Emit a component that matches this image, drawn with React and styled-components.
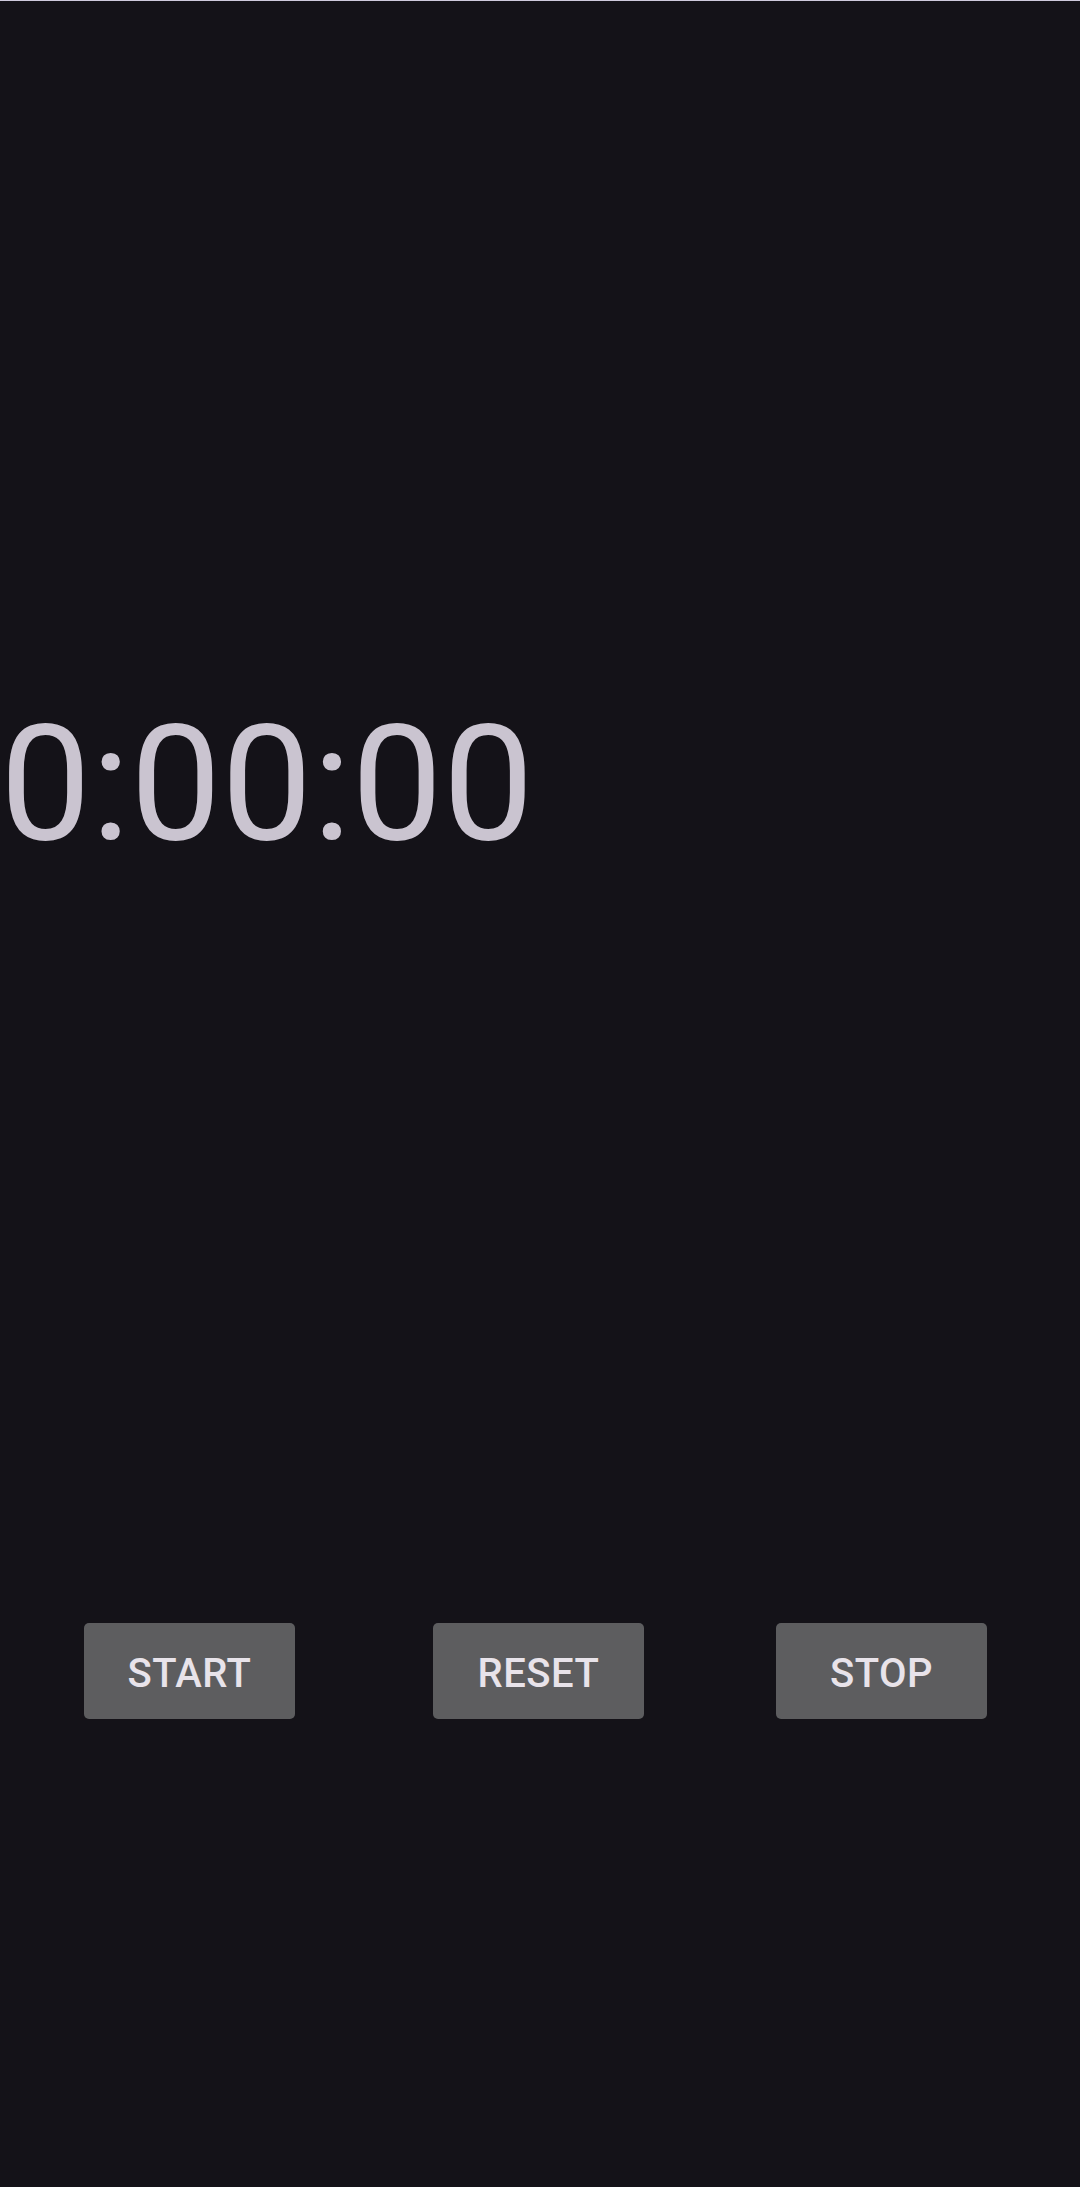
import React from "react";
import styled, { createGlobalStyle } from "styled-components";

const GlobalStyle = createGlobalStyle`
  html, body {
    margin: 0;
    padding: 0;
    background-color: #141218;
  }
  body {
    font-family: Roboto, "Noto Sans", sans-serif;
  }
`;

const Screen = styled.div`
  display: flex;
  flex-direction: column;
  width: 1080px;
  height: 2187px;
  box-sizing: border-box;
  border-top: 1px solid #cfcadd;
  background-color: #141218;
  overflow: hidden;
`;

const Timer = styled.div`
  margin-top: 683px;
  height: 200px;
  font-size: 162px;
  font-weight: 400;
  line-height: 200px;
  color: #cac4d0;
  letter-spacing: 0;
  white-space: nowrap;
`;

const ButtonRow = styled.div`
  display: flex;
  align-items: center;
  margin-top: 739px;
`;

const Button = styled.button`
  width: 211px;
  height: 96px;
  margin-left: ${(p) => p.$offset}px;
  padding: 4px 0 0;
  border: none;
  border-radius: 5px;
  background-color: #5d5d5f;
  color: #e8e3ea;
  font-family: Roboto, sans-serif;
  font-size: 40px;
  font-weight: 500;
  letter-spacing: 0.5px;
  cursor: pointer;
`;

export default function App() {
  return (
    <>
      <GlobalStyle />
      <Screen>
        <Timer>0:00:00</Timer>
        <ButtonRow>
          <Button $offset={84}>START</Button>
          <Button $offset={138}>RESET</Button>
          <Button $offset={132}>STOP</Button>
        </ButtonRow>
      </Screen>
    </>
  );
}
